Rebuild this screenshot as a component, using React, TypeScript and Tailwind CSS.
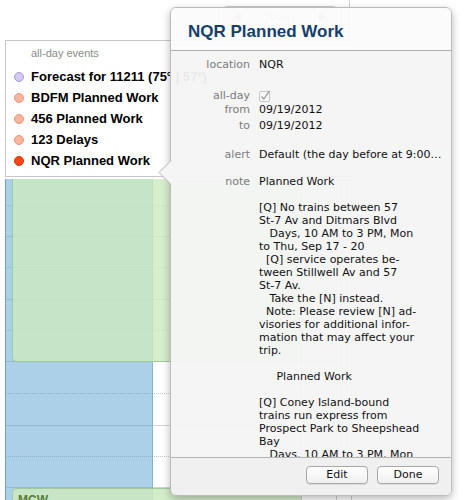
import React from 'react';

// all-day events shown in the day view
const allDayEvents = [
  { title: 'Forecast for 11211 (75° | 57°)', dot: 'bg-[#d3cbef] border-[#a59ad6]' },
  { title: 'BDFM Planned Work', dot: 'bg-[#f9b59d] border-[#e99578]' },
  { title: '456 Planned Work', dot: 'bg-[#f9b59d] border-[#e99578]' },
  { title: '123 Delays', dot: 'bg-[#f9b59d] border-[#e99578]' },
  { title: 'NQR Planned Work', dot: 'bg-[#ff4416] border-[#d83200]' },
];

// half-hour rows of the time grid (bottom border = the line)
const gridRows = [
  { h: 'h-[27px]', line: 'border-dotted border-[#c4c4c4]' },
  { h: 'h-[31px]', line: 'border-solid border-[#d2d2d2]' },
  { h: 'h-[31px]', line: 'border-dotted border-[#c4c4c4]' },
  { h: 'h-[32px]', line: 'border-solid border-[#d2d2d2]' },
  { h: 'h-[31px]', line: 'border-dotted border-[#c4c4c4]' },
  { h: 'h-[31px]', line: 'border-solid border-[#d2d2d2]' },
  { h: 'h-[32px]', line: 'border-dotted border-[#c4c4c4]' },
  { h: 'h-[32px]', line: 'border-solid border-[#d2d2d2]' },
  { h: 'h-[31px]', line: 'border-dotted border-[#c4c4c4]' },
  { h: 'h-[31px]', line: 'border-solid border-[#d2d2d2]' },
  { h: 'h-[31px]', line: 'border-dotted border-[#c4c4c4]' },
];

const noteLines = [
  'Planned Work',
  '',
  '[Q] No trains between 57',
  'St-7 Av and Ditmars Blvd',
  '   Days, 10 AM to 3 PM, Mon',
  'to Thu, Sep 17 - 20',
  '  [Q] service operates be-',
  'tween Stillwell Av and 57',
  'St-7 Av.',
  '   Take the [N] instead.',
  '  Note: Please review [N] ad-',
  'visories for additional infor-',
  'mation that may affect your',
  'trip.',
  '',
  '     Planned Work',
  '',
  '[Q] Coney Island-bound',
  'trains run express from',
  'Prospect Park to Sheepshead',
  'Bay',
  '   Days, 10 AM to 3 PM, Mon',
];

const Row = ({ label, children, className = '' }: { label: string; children: React.ReactNode; className?: string }) => (
  <div className={`grid grid-cols-[79px_1fr] gap-x-[9px] ${className}`}>
    <div className="text-right text-[#7b7b7b]">{label}</div>
    <div className="text-[#111]">{children}</div>
  </div>
);

const Popover = () => (
  <div className="absolute left-[170px] top-[7px] w-[282px] h-[489px] flex flex-col rounded-[6px] border border-[#bcbcbc] shadow-[0_3px_9px_rgba(0,0,0,0.28)] font-['DejaVu_Sans',sans-serif] text-[11px] leading-[13px]">
    {/* arrow pointing at the selected event */}
    <svg className="absolute left-[-13px] top-[152px]" width="14" height="25" viewBox="0 0 14 25">
      <path d="M13.5 0 L1 12.5 L13.5 25 Z" fill="#f5f5f5" />
      <path d="M13 0.5 L1 12.5 L13 24.5" fill="none" stroke="#b4b4b4" />
    </svg>

    <div className="h-[43px] shrink-0 rounded-t-[6px] border-b border-[#adadad] bg-[#fbfbfb]/[0.96] pl-[17px] pt-[14px]">
      <h1 className="font-['Liberation_Sans',Arial,sans-serif] text-[17px] leading-[20px] font-bold text-[#143f6b]">NQR Planned Work</h1>
    </div>

    <div className="flex-1 overflow-hidden bg-[#f4f4f4]/[0.95] pt-[7px]">
      <Row label="location">NQR</Row>
      <Row label="all-day" className="mt-[18px] h-[14px]">
        <svg width="12" height="12" viewBox="0 0 12 12" className="mt-[1px]">
          <rect x="0.5" y="1.5" width="10" height="10" rx="1.5" fill="#fafafa" stroke="#c6c6c6" />
          <path d="M2.5 6.5 L4.8 9 L10.5 0.8" fill="none" stroke="#9a9a9a" strokeWidth="1.3" />
        </svg>
      </Row>
      <Row label="from" className="h-[16px]">09/19/2012</Row>
      <Row label="to">09/19/2012</Row>
      <Row label="alert" className="mt-[16px]">
        <span className="whitespace-nowrap">Default (the day before at 9:00…</span>
      </Row>
      <Row label="note" className="mt-[14px]">
        {noteLines.map((l, i) => (
          <div key={i} className="h-[13px] whitespace-pre">{l}</div>
        ))}
      </Row>
    </div>

    <div className="h-[38px] shrink-0 rounded-b-[6px] border-t border-[#b3b3b3] bg-[#f0f0f0]/[0.97] flex justify-end gap-[9px] pr-[12px] pt-[8px]">
      {['Edit', 'Done'].map(b => (
        <button
          key={b}
          className="w-[62px] h-[18px] rounded-[4px] border border-[#a9a9a9] bg-gradient-to-b from-white to-[#f0f0f0] shadow-[0_1px_0_rgba(0,0,0,0.08)] text-[11px] leading-[16px] text-[#111]"
        >
          {b}
        </button>
      ))}
    </div>
  </div>
);

export default function App() {
  return (
    <div className="relative w-[466px] h-[500px] overflow-hidden bg-white font-['Liberation_Sans',Arial,sans-serif]">
      <div className="ml-[5px] w-[347px]">
        {/* toolbar strip, mostly hidden behind the popover */}
        <div className="h-[40px] w-[345px] border-r border-[#cfcfcf] pt-[6px] pl-[218px]">
          <div className="flex h-[20px] w-[114px] rounded-[4px] border border-[#c9c9c9] text-[12px] text-[#999]">
            <span className="w-[26px] text-center leading-[18px] border-r border-[#c9c9c9]">◀</span>
            <span className="flex-1 text-center leading-[18px]">Today</span>
            <span className="w-[26px] text-center leading-[18px] border-l border-[#c9c9c9]">▶</span>
          </div>
        </div>

        {/* all-day events */}
        <div className="h-[137px] border-t border-l border-b border-[#c6c6c6] pt-[5px]">
          <div className="pl-[25px] text-[11px] leading-[14px] text-[#8a8a8a]">all-day events</div>
          <div className="mt-[6px]">
            {allDayEvents.map(e => (
              <div key={e.title} className="flex items-center h-[21px] pl-[8px] gap-[7px] whitespace-nowrap">
                <span className={`w-[10px] h-[10px] rounded-full border ${e.dot}`} />
                <span className="text-[13px] font-bold text-black">{e.title}</span>
              </div>
            ))}
          </div>
        </div>

        {/* time grid */}
        <div className="mt-[2px] flex h-[321px]">
          <div className="relative w-[298px] border-r border-[#cfcfcf]">
            {gridRows.map((r, i) => (
              <div key={i} className={`${r.h} border-b ${r.line}`} />
            ))}
            <div className="absolute left-0 top-0 w-[148px] h-[321px] bg-[rgba(87,161,209,0.5)] border-l border-[#6ea2d1] border-r border-r-[#86b4d9]" />
            <div className="absolute left-[7px] top-0 w-[289px] h-[183px] rounded-bl-[5px] bg-[rgba(204,234,191,0.8)] border-l border-b border-[#a2ca99]" />
            <div className="absolute left-[7px] top-[309px] w-[289px] h-[30px] rounded-tl-[5px] bg-[rgba(204,234,191,0.85)] border-l border-t border-[#a2ca99] pl-[5px] pt-[2px] text-[12px] font-bold text-[#5a7c3a]">
              MCW
            </div>
          </div>
          <div className="w-[35px] border-r border-[#cfcfcf]">
            {gridRows.map((r, i) => (
              <div key={i} className={`${r.h} border-b ${r.line}`} />
            ))}
          </div>
          <div className="w-[15px] border-r border-[#cfcfcf]" />
        </div>
      </div>

      <Popover />
    </div>
  );
}
